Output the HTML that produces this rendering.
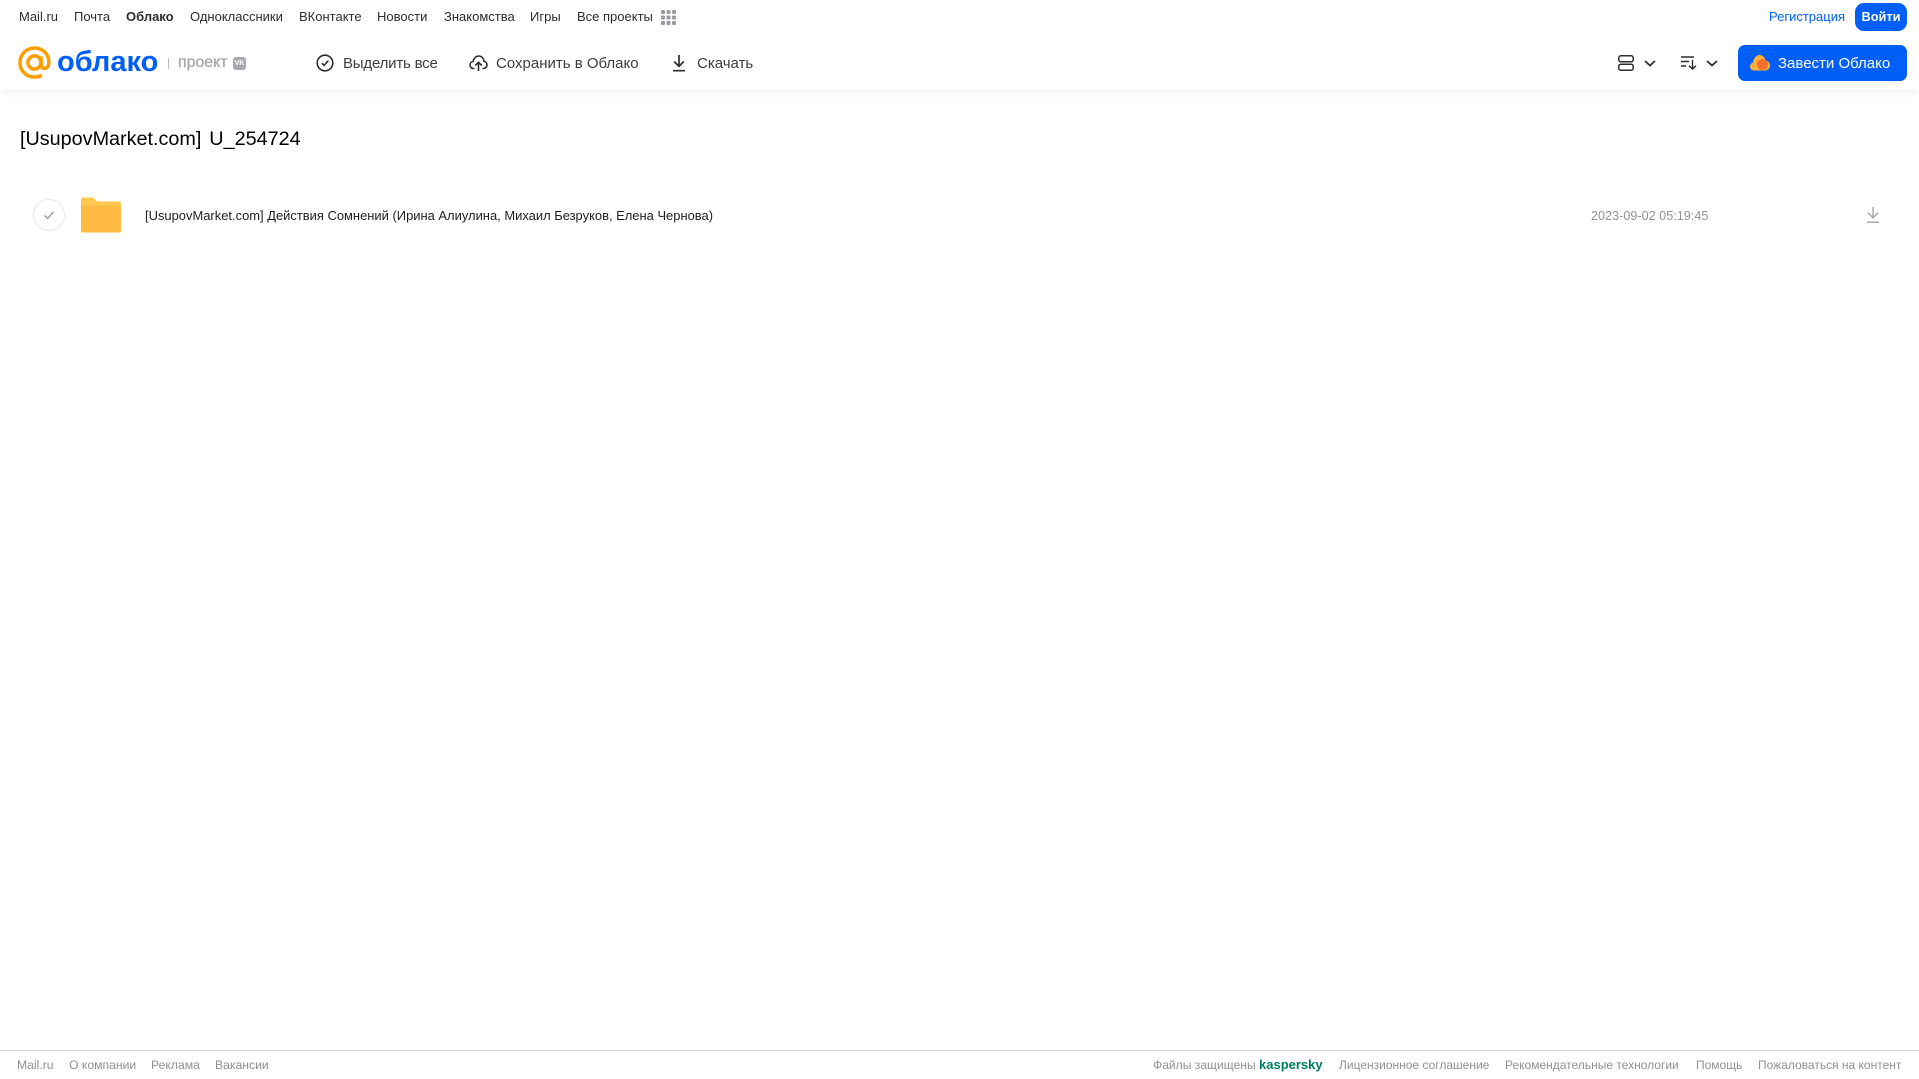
<!DOCTYPE html>
<html lang="ru"><head><meta charset="utf-8"><title>Облако</title>
<style>
html,body{margin:0;padding:0;background:#fff;width:1919px;height:1079px;overflow:hidden}
body{position:relative;font-family:"Liberation Sans",sans-serif}
.t{position:absolute;white-space:nowrap;line-height:20px;height:20px}
.n{top:7px;font-size:13px;color:#2c2d2e}
.a{top:53.5px;font-size:15px;color:#3c3d3f}
.f{top:1055px;font-size:12.2px;color:#8f9194}
.g{font-size:12px}
svg{position:absolute;overflow:visible}
</style></head><body>
<div style="position:absolute;left:0;top:0;width:1919px;height:90px;background:#fff;box-shadow:0 2px 8px rgba(0,0,0,.07)"></div>

<span class="t n" style="left:19px">Mail.ru</span>
<span class="t n" style="left:74px">Почта</span>
<span class="t n" style="left:126px;font-weight:bold">Облако</span>
<span class="t n" style="left:190px">Одноклассники</span>
<span class="t n" style="left:299px">ВКонтакте</span>
<span class="t n" style="left:377px">Новости</span>
<span class="t n" style="left:444px">Знакомства</span>
<span class="t n" style="left:530px">Игры</span>
<span class="t n" style="left:577px">Все проекты</span>
<svg style="left:661px;top:10px" width="15" height="15" fill="#9a9c9f"><rect width="4" height="4" rx="1"/><rect x="5.500" width="4" height="4" rx="1"/><rect x="11" width="4" height="4" rx="1"/><rect y="5.500" width="4" height="4" rx="1"/><rect x="5.500" y="5.500" width="4" height="4" rx="1"/><rect x="11" y="5.500" width="4" height="4" rx="1"/><rect y="11" width="4" height="4" rx="1"/><rect x="5.500" y="11" width="4" height="4" rx="1"/><rect x="11" y="11" width="4" height="4" rx="1"/></svg>

<span class="t n" style="left:1769px;color:#005ff9">Регистрация</span>
<div style="position:absolute;left:1855px;top:3px;width:52px;height:28px;border-radius:9px;background:#005ff9;color:#fff;font-size:12.800px;font-weight:bold;line-height:27px;text-align:center">Войти</div>

<svg style="left:18px;top:46px" width="33" height="33" viewBox="0 0 34 34" fill="none" stroke="#ff9e00" stroke-width="3.600"><circle cx="17" cy="17" r="6.800"/><path d="M23.800 10.500V19.500C23.800 24.500 31.500 24.500 31.800 17.500C32.200 8 25 2 17 2C8.500 2 2 8.800 2 17C2 25.500 8.500 32 17 32C20 32 22.500 31.300 24.500 30"/></svg>
<span class="t" style="left:57px;top:46px;height:32px;line-height:32px;font-size:29px;font-weight:bold;color:#005ff9">облако</span>
<div style="position:absolute;left:168px;top:58px;width:1px;height:11px;background:#b8babd"></div>
<span class="t" style="left:178px;top:53px;font-size:15.900px;color:#a5a7aa;-webkit-text-stroke:.3px #a5a7aa">проект</span>
<div style="position:absolute;left:233px;top:57px;width:13px;height:13px;border-radius:3px;background:#a8aaad;color:#fff;font-size:7px;font-weight:bold;line-height:13px;text-align:center">VK</div>

<svg style="left:316px;top:54px" width="18" height="18" viewBox="0 0 18 18" fill="none" stroke="#2c2d2e" stroke-width="1.600"><circle cx="9" cy="9" r="7.800"/><path d="M5.800 9.200L8.100 11.400L12.300 6.600"/></svg>
<span class="t a" style="left:343px;letter-spacing:-.2px">Выделить все</span>
<svg style="left:469px;top:54px" width="19" height="18" viewBox="0 0 19 18" fill="none" stroke="#2c2d2e" stroke-width="1.600"><path d="M5.500 14.500H4.500C2.300 14.500 1 12.800 1 11C1 9.200 2.300 7.700 4.100 7.500C4.600 4.500 6.800 2 9.700 2C12.500 2 14.600 4.200 15 7.200C16.800 7.600 18 9.200 18 11C18 12.900 16.500 14.500 14.500 14.500H13.500"/><path d="M9.500 17V8.500M6.200 11.500L9.500 8.200L12.800 11.500"/></svg>
<span class="t a" style="left:496px">Сохранить в Облако</span>
<svg style="left:671px;top:54px" width="16" height="18" viewBox="0 0 16 18" fill="none" stroke="#2c2d2e" stroke-width="1.700"><path d="M8 1V12M3.200 7.500L8 12.300L12.800 7.500M2 16.700H14"/></svg>
<span class="t a" style="left:697px">Скачать</span>

<svg style="left:1618px;top:55px" width="16" height="16" viewBox="0 0 16 16" fill="none" stroke="#2c2d2e" stroke-width="1.500"><rect x=".8" y=".8" width="14.400" height="6" rx="2"/><rect x=".8" y="9.200" width="14.400" height="6" rx="2"/></svg>
<svg style="left:1644px;top:60px" width="12" height="7" viewBox="0 0 12 7" fill="none" stroke="#2c2d2e" stroke-width="1.800"><path d="M1 1L6 5.500L11 1"/></svg>
<svg style="left:1681px;top:56px" width="16" height="14" viewBox="0 0 16 14" fill="none" stroke="#2c2d2e" stroke-width="1.400"><path d="M0 1H13M0 5.500H8M0 10H5M11.500 4V13M8 9.800L11.500 13L15 9.800"/></svg>
<svg style="left:1706px;top:60px" width="12" height="7" viewBox="0 0 12 7" fill="none" stroke="#2c2d2e" stroke-width="1.800"><path d="M1 1L6 5.500L11 1"/></svg>

<div style="position:absolute;left:1738px;top:45px;width:169px;height:36px;border-radius:7px;background:#005ff9"></div>
<svg style="left:1750px;top:54px" width="20" height="17" viewBox="0 0 20 17"><path fill="#ffb03a" d="M4 16.500C1.800 16.500 0 14.800 0 12.500C0 10.500 1.300 9 3 8.600C3.500 4.500 6 1 9.500 1C12.500 1 15 3.500 15.500 6.500C18 6.800 20 9 20 11.500C20 14.300 17.800 16.500 15 16.500Z"/><circle fill="#f4702a" cx="12.500" cy="10.500" r="5.500"/></svg>
<span class="t" style="left:1778px;top:53.500px;font-size:15px;color:#fff">Завести Облако</span>

<span class="t" style="left:20px;top:127.500px;height:22px;line-height:22px;font-size:19.800px;word-spacing:2.400px;color:#000">[UsupovMarket.com] U_254724</span>

<svg style="left:33px;top:199px" width="32" height="32" viewBox="0 0 32 32" fill="none"><circle cx="16" cy="16" r="15.500" stroke="#e7e8ea"/><path d="M11.500 16.500L14.700 19.500L20.500 12.800" stroke="#929396" stroke-width="1.300"/></svg>
<svg style="left:81px;top:197px" width="40" height="36" viewBox="0 0 41 36"><path fill="#ffc94f" d="M2 0H11C13 0 14 1 15 2.500C15.600 3.500 16.500 4 18 4H39C40.200 4 41 4.800 41 6V10H0V2C0 .8.800 0 2 0Z"/><path fill="#ffbb42" d="M0 8H41V34C41 35.200 40.200 36 39 36H2C.8 36 0 35.200 0 34Z"/></svg>
<span class="t" style="left:145px;top:206px;font-size:12.950px;color:#1e1e20">[UsupovMarket.com] Действия Сомнений (Ирина Алиулина, Михаил Безруков, Елена Чернова)</span>
<span class="t" style="left:1591px;top:206px;font-size:12.650px;color:#929396">2023-09-02 05:19:45</span>
<svg style="left:1866px;top:206px" width="14" height="18" viewBox="0 0 14 18" fill="none" stroke="#a9abae" stroke-width="1.500"><path d="M7 1V11.500M2 6.800L7 11.800L12 6.800M1 16.300H13"/></svg>

<div style="position:absolute;left:0;top:1050px;width:1919px;height:1px;background:#dcdcde"></div>
<span class="t f" style="left:17px">Mail.ru</span>
<span class="t f" style="left:69px">О компании</span>
<span class="t f" style="left:151px">Реклама</span>
<span class="t f" style="left:215px">Вакансии</span>
<span class="t f" style="left:1153px;font-size:12.100px">Файлы защищены</span>
<span class="t f" style="left:1259px;font-size:13px;font-weight:bold;color:#007d60">kaspersky</span>
<span class="t f g" style="left:1339px">Лицензионное соглашение</span>
<span class="t f g" style="left:1505px">Рекомендательные технологии</span>
<span class="t f g" style="left:1696px">Помощь</span>
<span class="t f g" style="left:1758px">Пожаловаться на контент</span>
</body></html>
